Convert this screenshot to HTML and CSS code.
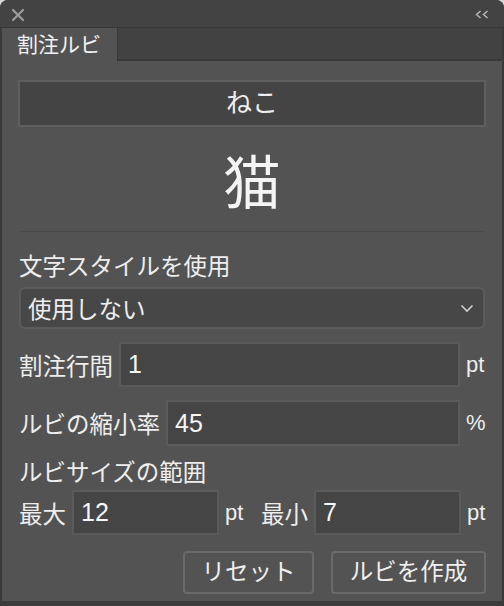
FILE: index.html
```html
<!DOCTYPE html>
<html lang="ja">
<head>
<meta charset="utf-8">
<title>割注ルビ</title>
<link rel="stylesheet" href="styles.css">
</head>
<body>
<div class="window">
  <div class="titlebar">
    <svg class="close" width="14" height="14" viewBox="0 0 14 14"><path d="M2 2 L12 12 M12 2 L2 12" stroke="#9c9c9c" stroke-width="2.2" stroke-linecap="round"/></svg>
    <svg class="collapse" width="14" height="9" viewBox="0 0 14 9"><path d="M5.5 1 L1.5 4.5 L5.5 8 M12.5 1 L8.5 4.5 L12.5 8" fill="none" stroke="#b8b8b8" stroke-width="1.4"/></svg>
  </div>
  <div class="tabbar">
    <div class="tab">割注ルビ</div>
    <div class="tabrest"></div>
  </div>
  <div class="panel">
    <div class="rubybox">ねこ</div>
    <div class="kanji">猫</div>
    <div class="sep"></div>
    <div class="label">文字スタイルを使用</div>
    <div class="select">
      <span>使用しない</span>
      <svg class="chev" width="14" height="9" viewBox="0 0 14 9"><path d="M1.5 1.5 L7 7 L12.5 1.5" fill="none" stroke="#cfcfcf" stroke-width="1.6"/></svg>
    </div>
    <div class="row r1">
      <span class="lbl">割注行間</span>
      <div class="field">1</div>
      <span class="unit">pt</span>
    </div>
    <div class="row r2">
      <span class="lbl">ルビの縮小率</span>
      <div class="field">45</div>
      <span class="unit">%</span>
    </div>
    <div class="label l3">ルビサイズの範囲</div>
    <div class="row r4">
      <span class="lbl">最大</span>
      <div class="field small">12</div>
      <span class="unit mid">pt</span>
      <span class="lbl">最小</span>
      <div class="field small">7</div>
      <span class="unit">pt</span>
    </div>
    <div class="buttons">
      <div class="btn b1">リセット</div>
      <div class="btn b2">ルビを作成</div>
    </div>
  </div>
</div>
</body>
</html>
```
FILE: styles.css
```css
html, body {
  margin: 0;
  padding: 0;
  background: #d8d8d8;
}
body {
  font-family: "Liberation Sans", "Noto Sans CJK JP", sans-serif;
  color: #eeeeee;
}
.window {
  width: 504px;
  height: 606px;
  background: #3a3a3a;
  border-radius: 8px 8px 0 0;
  overflow: hidden;
  display: flex;
  flex-direction: column;
}
.titlebar {
  height: 27px;
  flex: none;
  background: #434343;
  border-bottom: 1px solid #373737;
  display: flex;
  align-items: center;
  justify-content: space-between;
  padding: 0 15px 0 11px;
}
.close { margin-top: 3px; }
.collapse { margin-top: 1px; }
.tabbar {
  height: 33px;
  flex: none;
  display: flex;
  background: #424242;
  margin: 0 2px;
}
.tab {
  width: 116px;
  background: #535353;
  border-right: 1px solid #383838;
  box-sizing: border-box;
  font-size: 21px;
  line-height: 33px;
  padding-left: 15px;
  color: #f2f2f2;
}
.tabrest {
  flex: 1;
  border-bottom: 2px solid #383838;
}
.panel {
  flex: none;
  height: 540px;
  margin: 0 2px;
  background: #535353;
  padding: 0 16px;
  box-sizing: border-box;
  display: flex;
  flex-direction: column;
}
.rubybox {
  margin-top: 19px;
  height: 47px;
  box-sizing: border-box;
  background: #444444;
  border: 2px solid #5f5f5f;
  text-align: center;
  font-size: 26px;
  line-height: 43px;
}
.kanji {
  height: 104px;
  display: flex;
  align-items: center;
  justify-content: center;
  font-size: 58px;
  color: #f4f4f4;
}
.sep {
  height: 1px;
  background: #484848;
  margin: 0 2px;
}
.label {
  font-size: 23.5px;
  line-height: 24px;
  height: 24px;
  margin-top: 23px;
  padding-left: 1px;
  white-space: nowrap;
}
.select {
  margin-top: 8px;
  height: 42px;
  box-sizing: border-box;
  margin-left: 1px;
  margin-right: 1px;
  border: 2px solid #5b5b5b;
  border-radius: 6px;
  background: #474747;
  display: flex;
  align-items: center;
  justify-content: space-between;
  padding: 0 9px 0 7px;
  font-size: 23.5px;
}
.chev { margin-top: 1px; }
.row {
  display: flex;
  align-items: center;
  font-size: 23.5px;
  white-space: nowrap;
}
.r1 { margin-top: 13px; height: 45px; }
.r2 { margin-top: 13px; height: 46px; }
.l3 { margin-top: 15px; }
.r4 { margin-top: 5px; height: 45px; }
.lbl {
  padding-left: 1px;
  margin-right: 6px;
}
.field {
  flex: 1;
  align-self: stretch;
  box-sizing: border-box;
  background: #454545;
  border: 2px solid #5a5a5a;
  padding-left: 7px;
  font-size: 25px;
  color: #f6f6f6;
  display: flex;
  align-items: center;
}
.field.small {
  flex: none;
  width: 147px;
}
.unit {
  width: 26px;
  padding-left: 6px;
  box-sizing: border-box;
  font-size: 22px;
}
.unit.mid {
  width: 43px;
}
.buttons {
  margin-top: 16px;
  display: flex;
  justify-content: flex-end;
  gap: 17px;
}
.btn {
  height: 43px;
  box-sizing: border-box;
  border: 2px solid #6a6a6a;
  border-radius: 4px;
  font-size: 23.5px;
  line-height: 39px;
  text-align: center;
}
.b1 { width: 131px; }
.b2 { width: 155px; }
```
